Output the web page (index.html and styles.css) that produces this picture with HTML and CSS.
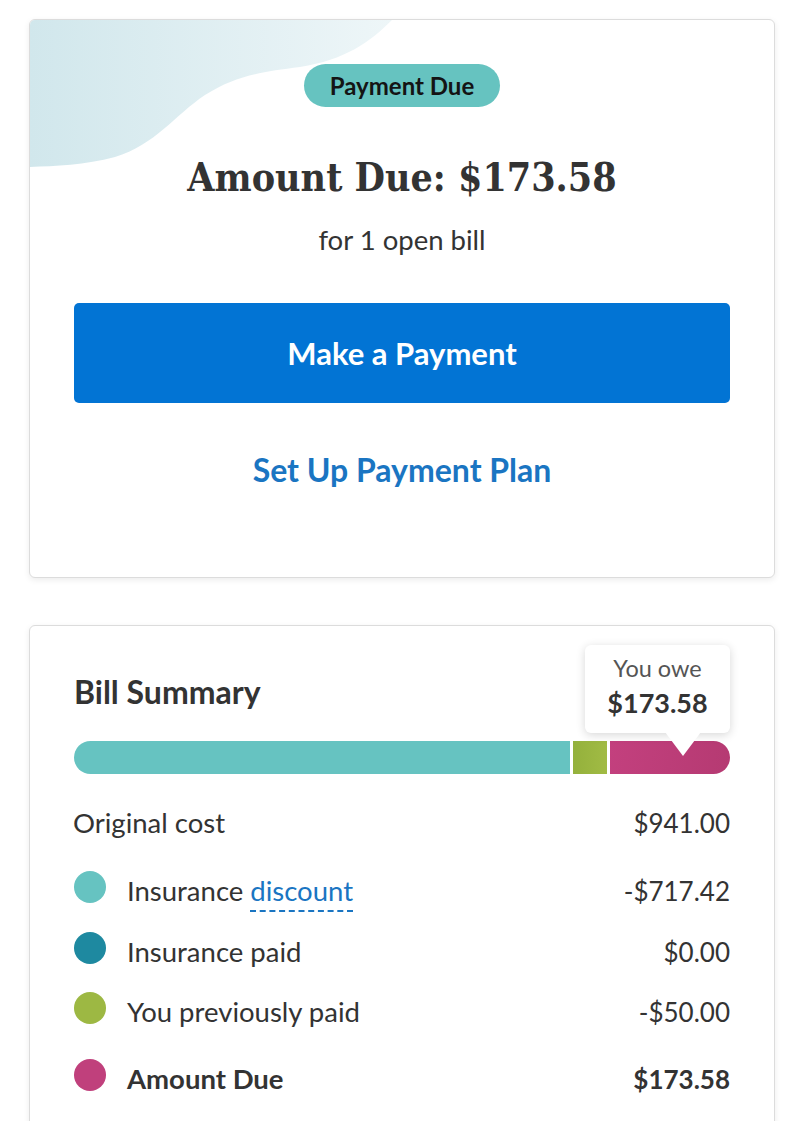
FILE: index.html
```html
<!DOCTYPE html>
<html lang="en">
<head>
<meta charset="utf-8">
<title>Bill</title>
<link rel="stylesheet" href="styles.css">
</head>
<body>
<div class="page">
  <section class="card card-due">
    <svg class="wave" width="400" height="170" viewBox="0 0 400 170" aria-hidden="true">
      <defs>
        <linearGradient id="wg" x1="0" y1="0" x2="1" y2="0">
          <stop offset="0" stop-color="#d1e7ec"/>
          <stop offset="1" stop-color="#eef6f8"/>
        </linearGradient>
      </defs>
      <path d="M0,0 H362 C340,22 315,40 270,47 C230,52 205,56 175,75 C145,95 125,125 85,137 C55,145 25,146 0,147 Z" fill="url(#wg)"/>
    </svg>
    <div class="due-inner">
      <span class="badge">Payment Due</span>
      <h1 class="amount">Amount Due: $173.58</h1>
      <p class="sub">for 1 open bill</p>
      <button class="btn-primary" type="button">Make a Payment</button>
      <a class="link-plan" href="#">Set Up Payment Plan</a>
    </div>
  </section>

  <section class="card card-summary">
    <h2 class="summary-title">Bill Summary</h2>
    <div class="bar-wrap">
      <div class="bar">
        <span class="seg seg-teal" style="flex-grow:717.42"></span>
        <span class="seg seg-green" style="flex-grow:50"></span>
        <span class="seg seg-pink" style="flex-grow:173.58"></span>
      </div>
      <div class="tooltip">
        <span class="tip-label">You owe</span>
        <span class="tip-value">$173.58</span>
      </div>
    </div>
    <div class="rows">
      <div class="row row-first">
        <span class="label">Original cost</span>
        <span class="value">$941.00</span>
      </div>
      <div class="row row-disc">
        <span class="dot dot-teal"></span>
        <span class="label">Insurance <span class="term">discount</span></span>
        <span class="value">-$717.42</span>
      </div>
      <div class="row row-ins">
        <span class="dot dot-blue"></span>
        <span class="label">Insurance paid</span>
        <span class="value">$0.00</span>
      </div>
      <div class="row row-prev">
        <span class="dot dot-green"></span>
        <span class="label">You previously paid</span>
        <span class="value">-$50.00</span>
      </div>
      <div class="row row-total">
        <span class="dot dot-pink"></span>
        <span class="label">Amount Due</span>
        <span class="value">$173.58</span>
      </div>
    </div>
  </section>
</div>
</body>
</html>
```

FILE: styles.css
```css
* { box-sizing: border-box; }
html, body { margin: 0; padding: 0; background: #ffffff; }
body {
  font-family: "Lato", "Liberation Sans", sans-serif;
  color: #333333;
  overflow: hidden;
  height: 1121px;
}
.page {
  padding: 19px 25px 0 29px;
  display: flex;
  flex-direction: column;
  gap: 47px;
}
.card {
  position: relative;
  background: #ffffff;
  border: 1px solid #dcdcdc;
  border-radius: 6px;
  box-shadow: 0 2px 6px rgba(0, 0, 0, 0.08);
  overflow: hidden;
}
.card-due { height: 559px; }
.wave {
  position: absolute;
  left: 0;
  top: 0;
}
.due-inner {
  position: relative;
  display: flex;
  flex-direction: column;
  align-items: center;
  padding: 44px 44px 0;
}
.badge {
  display: inline-flex;
  align-items: center;
  justify-content: center;
  height: 43px;
  padding: 0 26px;
  background: #66c3c0;
  border-radius: 22px;
  color: #141414;
  font-size: 24px;
  font-weight: 700;
}
.amount {
  margin: 46px 0 0;
  font-family: "DejaVu Serif", "Liberation Serif", serif;
  font-stretch: condensed;
  font-weight: 700;
  font-size: 39px;
  line-height: 48px;
  color: #333333;
}
.sub {
  margin: 24px 0 0;
  font-size: 27.5px;
  line-height: 30px;
  color: #333333;
}
.btn-primary {
  margin-top: 48px;
  width: 100%;
  height: 100px;
  border: none;
  border-radius: 5px;
  background: #0274d4;
  color: #ffffff;
  font-family: "Lato", "Liberation Sans", sans-serif;
  font-size: 31px;
  font-weight: 700;
}
.link-plan {
  margin-top: 49px;
  font-size: 32px;
  line-height: 36px;
  font-weight: 700;
  color: #1a75c2;
  text-decoration: none;
}
.card-summary {
  padding: 48px 44px 40px;
  overflow: visible;
  min-height: 520px;
}
.summary-title {
  margin: 0;
  font-size: 32px;
  line-height: 36px;
  font-weight: 700;
  color: #333333;
}
.bar-wrap {
  position: relative;
  margin-top: 31px;
}
.bar {
  display: flex;
  gap: 3px;
  height: 33px;
  border-radius: 17px;
  overflow: hidden;
}
.seg { display: block; flex-basis: 0; }
.seg-teal { background: #66c3c1; }
.seg-green { background: linear-gradient(90deg, #94b13c, #a1bb44); }
.seg-pink { background: linear-gradient(100deg, #c3407e, #b53a72); }
.tooltip {
  position: absolute;
  right: 0;
  top: -96px;
  width: 145px;
  height: 88px;
  padding-top: 9px;
  background: #ffffff;
  border-radius: 6px;
  box-shadow: 0 2px 10px rgba(0, 0, 0, 0.16);
  display: flex;
  flex-direction: column;
  align-items: center;
  justify-content: flex-start;
  gap: 6px;
}
.tooltip::after {
  content: "";
  position: absolute;
  left: 80px;
  bottom: -23px;
  border-left: 18px solid transparent;
  border-right: 18px solid transparent;
  border-top: 24px solid #ffffff;
}
.tip-label {
  font-size: 23.5px;
  line-height: 28px;
  color: #555555;
}
.tip-value {
  font-size: 27px;
  line-height: 30px;
  font-weight: 700;
  color: #333333;
}
.rows {
  display: flex;
  flex-direction: column;
}
.row {
  display: flex;
  align-items: center;
  font-size: 27.5px;
  line-height: 30px;
}
.row-first { margin-top: 34px; margin-left: -1px; }
.row-disc { margin-top: 37px; }
.row-ins { margin-top: 29px; }
.row-prev { margin-top: 28px; }
.row-total { margin-top: 35px; }
.label { flex: 1; color: #333333; }
.value { color: #333333; font-size: 26px; }
.row-total .label, .row-total .value { font-weight: 700; }
.dot {
  width: 32px;
  height: 32px;
  border-radius: 50%;
  margin-right: 21px;
  transform: translateY(-4px);
  flex-shrink: 0;
}
.dot-teal { background: #66c3c1; }
.dot-blue { background: #1e89a0; }
.dot-green { background: #9db843; }
.dot-pink { background: #c0407c; }
.term {
  color: #1a75c2;
  border-bottom: 2px dashed #1a75c2;
  padding-bottom: 3px;
}
```
